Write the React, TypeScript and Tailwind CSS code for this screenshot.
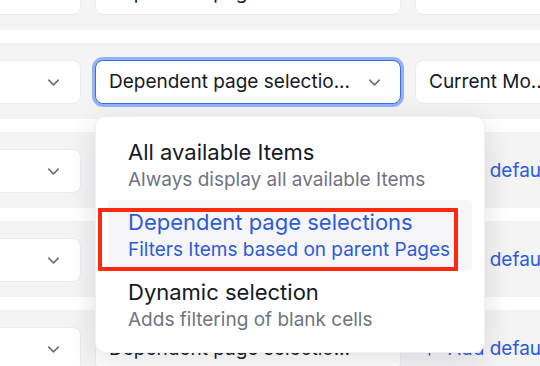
import { ChevronDown, Plus } from "lucide-react";

type Row = {
  middle: string;
  focused?: boolean;
  right: "select" | "add" | "empty";
  rightText?: string;
};

const rows: Row[] = [
  { middle: "Dependent page selectio...", right: "empty" },
  { middle: "Dependent page selectio...", focused: true, right: "select", rightText: "Current Mo..." },
  { middle: "Dependent page selectio...", right: "add" },
  { middle: "Dependent page selectio...", right: "add" },
  { middle: "Dependent page selectio...", right: "add" },
];

const options = [
  { title: "All available Items", sub: "Always display all available Items" },
  { title: "Dependent page selections", sub: "Filters Items based on parent Pages", active: true },
  { title: "Dynamic selection", sub: "Adds filtering of blank cells" },
];

function SelectBox({ text, focused }: { text: string; focused?: boolean }) {
  return (
    <div
      className={`flex items-center justify-between w-[306px] h-[44px] rounded-lg bg-white pl-[13px] pr-[16px] ${
        focused
          ? "border border-[#3d6fe3] shadow-[0_0_0_3px_#93b3f6]"
          : "border border-[#ececef]"
      }`}
    >
      <span className="text-[19px] text-[#141a26] whitespace-nowrap">{text}</span>
      <ChevronDown size={19} strokeWidth={2} className="text-[#6b7080] shrink-0" />
    </div>
  );
}

export default function App() {
  return (
    <div
      className="relative w-[540px] h-[366px] overflow-hidden bg-white"
      style={{ fontFamily: "Inter, 'Noto Sans', sans-serif" }}
    >
      {/* table rows */}
      <div className="flex flex-col gap-[13px] mt-[-46px]">
        {rows.map((row, i) => (
          <div key={i} className="h-[76px] bg-[#f4f4f5] flex items-start gap-[14px] pt-[17px] ml-[-120px]">
            <div className="flex items-center justify-end w-[201px] h-[44px] rounded-lg bg-white border border-[#ececef] pr-[17px] shrink-0">
              <ChevronDown size={19} strokeWidth={2} className="text-[#6b7080]" />
            </div>
            <div className="shrink-0">
              <SelectBox text={row.middle} focused={row.focused} />
            </div>
            {row.right === "select" && (
              <div className="flex items-center w-[200px] h-[44px] rounded-lg bg-white border border-[#ececef] pl-[13px] shrink-0">
                <span className="text-[19px] text-[#141a26] whitespace-nowrap">{row.rightText}</span>
              </div>
            )}
            {row.right === "empty" && (
              <div className="w-[200px] h-[44px] rounded-lg bg-white border border-[#ececef] shrink-0" />
            )}
            {row.right === "add" && (
              <div className="flex items-center gap-[9px] h-[44px] pl-[5px] text-[#2d5bd8] shrink-0">
                <Plus size={19} strokeWidth={2} />
                <span className="text-[19px] whitespace-nowrap">Add default</span>
              </div>
            )}
          </div>
        ))}
      </div>

      {/* dropdown menu */}
      <div className="absolute left-[95px] top-[116px] w-[390px] rounded-[10px] bg-white border border-[#f0f0f2] shadow-[0_6px_28px_rgba(20,20,40,0.13)] pt-[13px] pb-[12px]">
        {options.map((o) => (
          <div
            key={o.title}
            className={`mx-[12px] h-[70px] rounded-[4px] px-[20px] pt-[8px] ${o.active ? "bg-[#f6f6f8]" : ""}`}
          >
            <div className={`text-[22px] leading-[28px] whitespace-nowrap ${o.active ? "text-[#2d5bd8]" : "text-[#141a26]"}`}>
              {o.title}
            </div>
            <div className={`text-[19px] leading-[24px] mt-[2px] whitespace-nowrap ${o.active ? "text-[#2d5bd8]" : "text-[#6f7482]"}`}>
              {o.sub}
            </div>
          </div>
        ))}
      </div>

      {/* annotation */}
      <div className="absolute left-[98px] top-[208px] w-[360px] h-[63px] border-4 border-[#ff2a0d]" />
    </div>
  );
}
